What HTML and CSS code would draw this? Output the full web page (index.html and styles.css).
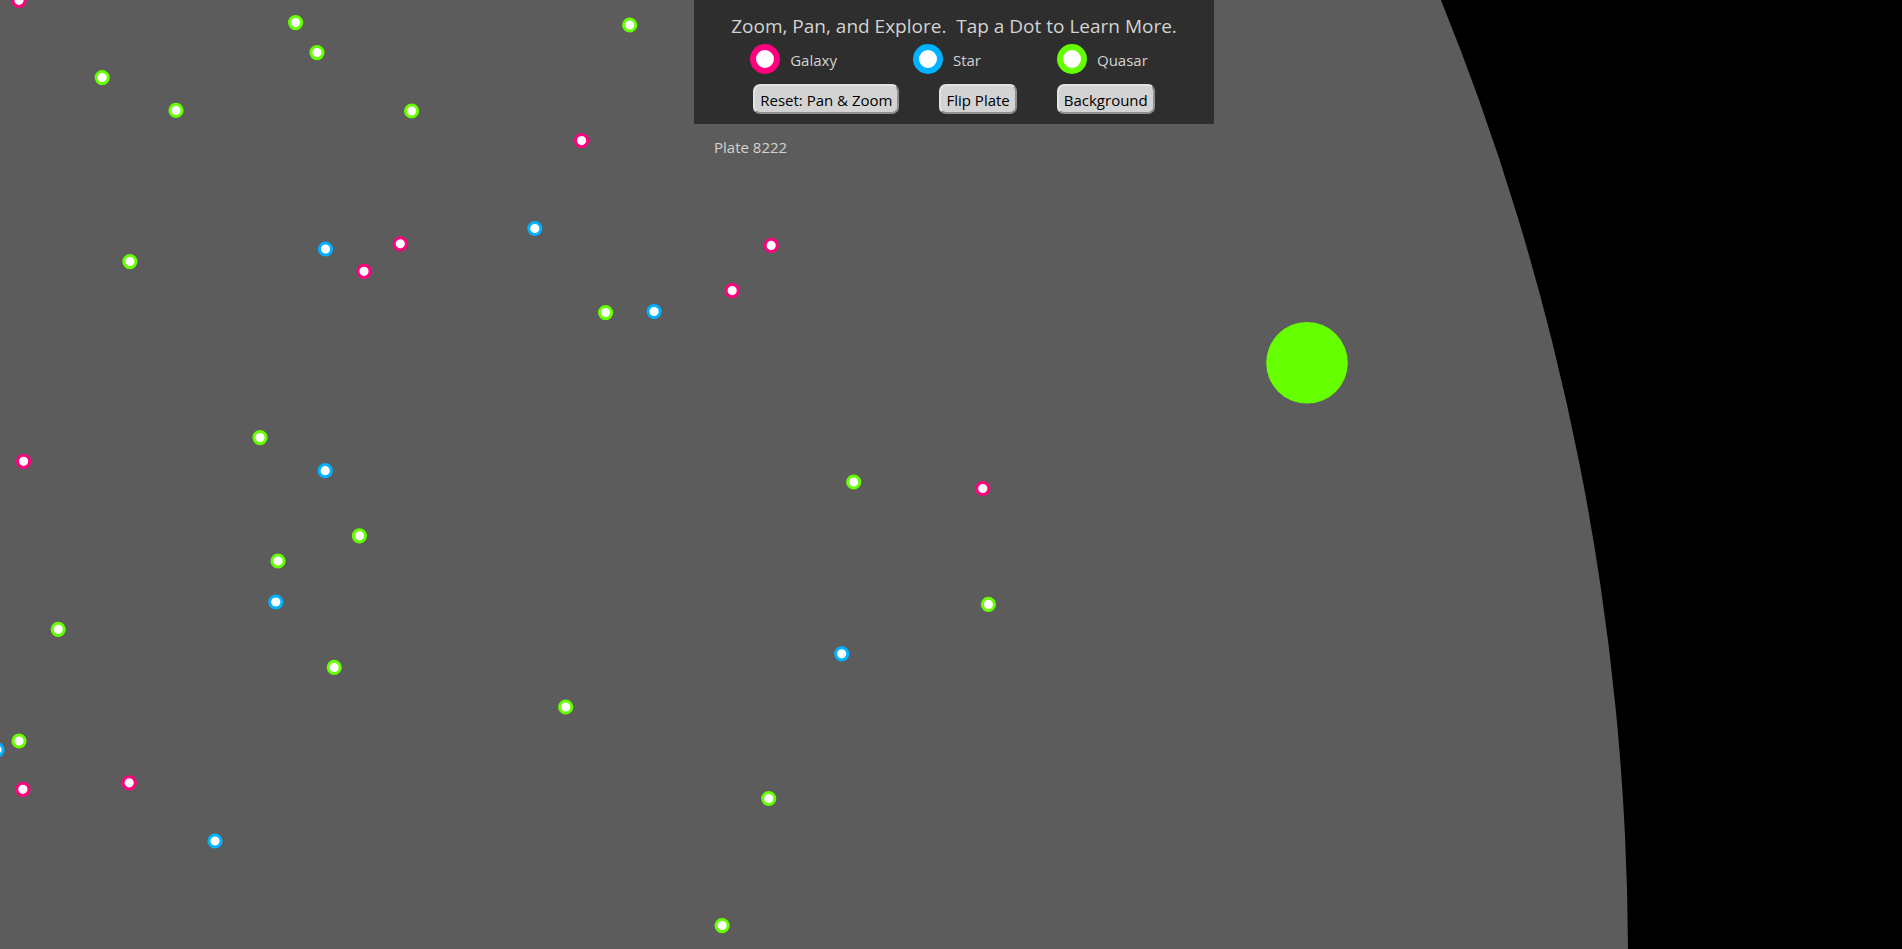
FILE: index.html
```
<!DOCTYPE html>
<html lang="en">
<head>
<meta charset="utf-8">
<title>Plate 8222</title>
<link rel="stylesheet" href="styles.css">
</head>
<body>
<svg class="sky" aria-hidden="true">
  <circle class="plate" cx="-923" cy="959" r="2551"/>
  <g class="dots galaxy">
    <circle cx="19" cy="0.3" r="6.1"/>
    <circle cx="400.3" cy="243.8" r="6.1"/>
    <circle cx="364" cy="271.3" r="6.1"/>
    <circle cx="581.6" cy="140.6" r="6.1"/>
    <circle cx="771.2" cy="245.4" r="6.1"/>
    <circle cx="732.2" cy="290.6" r="6.1"/>
    <circle cx="23.6" cy="461.3" r="6.1"/>
    <circle cx="22.9" cy="789.3" r="6.1"/>
    <circle cx="129.2" cy="782.8" r="6.1"/>
    <circle cx="982.8" cy="488.5" r="6.1"/>
  </g>
  <g class="dots star">
    <circle cx="325.5" cy="249" r="6.1"/>
    <circle cx="534.8" cy="228.5" r="6.1"/>
    <circle cx="654.1" cy="311.5" r="6.1"/>
    <circle cx="325.2" cy="470.7" r="6.1"/>
    <circle cx="275.8" cy="602" r="6.1"/>
    <circle cx="841.7" cy="653.8" r="6.1"/>
    <circle cx="215" cy="841" r="6.1"/>
    <circle cx="-3" cy="749.8" r="6.1"/>
  </g>
  <g class="dots quasar">
    <circle cx="295.6" cy="22.6" r="6.1"/>
    <circle cx="317" cy="52.6" r="6.1"/>
    <circle cx="102.2" cy="77.6" r="6.1"/>
    <circle cx="176" cy="110.4" r="6.1"/>
    <circle cx="411.6" cy="111" r="6.1"/>
    <circle cx="129.9" cy="261.6" r="6.1"/>
    <circle cx="629.7" cy="25" r="6.1"/>
    <circle cx="605.6" cy="312.6" r="6.1"/>
    <circle cx="260" cy="437.6" r="6.1"/>
    <circle cx="359.4" cy="535.8" r="6.1"/>
    <circle cx="278" cy="561" r="6.1"/>
    <circle cx="58.2" cy="629.3" r="6.1"/>
    <circle cx="334.2" cy="667.4" r="6.1"/>
    <circle cx="19" cy="741" r="6.1"/>
    <circle cx="853.7" cy="482" r="6.1"/>
    <circle cx="988.4" cy="604.4" r="6.1"/>
    <circle cx="565.7" cy="707" r="6.1"/>
    <circle cx="768.7" cy="798.5" r="6.1"/>
    <circle cx="722.1" cy="925.6" r="6.1"/>
  </g>
  <circle class="center-hole" cx="1307" cy="362.8" r="40.8"/>
</svg>
<header class="overlay">
  <div class="column">
    <div class="panel">
      <p class="title">Zoom, Pan, and Explore.&nbsp; Tap a Dot to Learn More.</p>
      <ul class="legend">
        <li class="key"><span class="ring galaxy"></span><span class="label">Galaxy</span></li>
        <li class="key"><span class="ring star"></span><span class="label">Star</span></li>
        <li class="key"><span class="ring quasar"></span><span class="label">Quasar</span></li>
      </ul>
      <div class="actions">
        <button class="action" type="button">Reset: Pan &amp; Zoom</button>
        <button class="action" type="button">Flip Plate</button>
        <button class="action" type="button">Background</button>
      </div>
    </div>
    <p class="plate-name">Plate 8222</p>
  </div>
</header>
</body>
</html>
```
FILE: styles.css
```
* { box-sizing: border-box; }

body {
  margin: 0;
  min-height: 100vh;
  overflow: hidden;
  background: #000;
  color: #d3d3d3;
  font: 15px/20px "Segoe UI", "Open Sans", "Noto Sans", sans-serif;
}

.galaxy { --tone: #ff007f; }
.star { --tone: #00b2ff; }
.quasar { --tone: #66ff00; }

.sky {
  display: block;
  width: 100%;
  height: 100vh;
}

.plate { fill: #5c5c5c; }
.center-hole { fill: #66ff00; }

.dots {
  fill: #fff;
  stroke: var(--tone);
  stroke-width: 3px;
}

.overlay {
  position: absolute;
  inset: 0 0 auto;
  display: flex;
  justify-content: center;
  padding-left: 6px;
}

.column {
  width: 520px;
  max-width: 100%;
}

.panel {
  padding: 12px 0 10px;
  background: #2e2e2e;
}

.title {
  margin: 0;
  font-size: 19px;
  line-height: 28px;
  text-align: center;
}

.legend {
  display: flex;
  justify-content: center;
  gap: 76px;
  margin: 4px 0 10px;
  padding: 0 10px 0 0;
  list-style: none;
}

.key {
  display: flex;
  align-items: center;
  gap: 10px;
}

.label { padding-top: 2px; }

.ring {
  width: 30px;
  height: 30px;
  border: 6px solid var(--tone);
  border-radius: 50%;
  background: #fff;
}

.actions {
  display: flex;
  justify-content: center;
  gap: 40px;
}

.action {
  height: 30px;
  padding: 2px 5px 0;
  border: 2px outset #e3e3e3;
  border-radius: 7px;
  background: #d3d3d3;
  color: #000;
  font: inherit;
}

.plate-name {
  margin: 0;
  padding: 13px 20px;
}
```
